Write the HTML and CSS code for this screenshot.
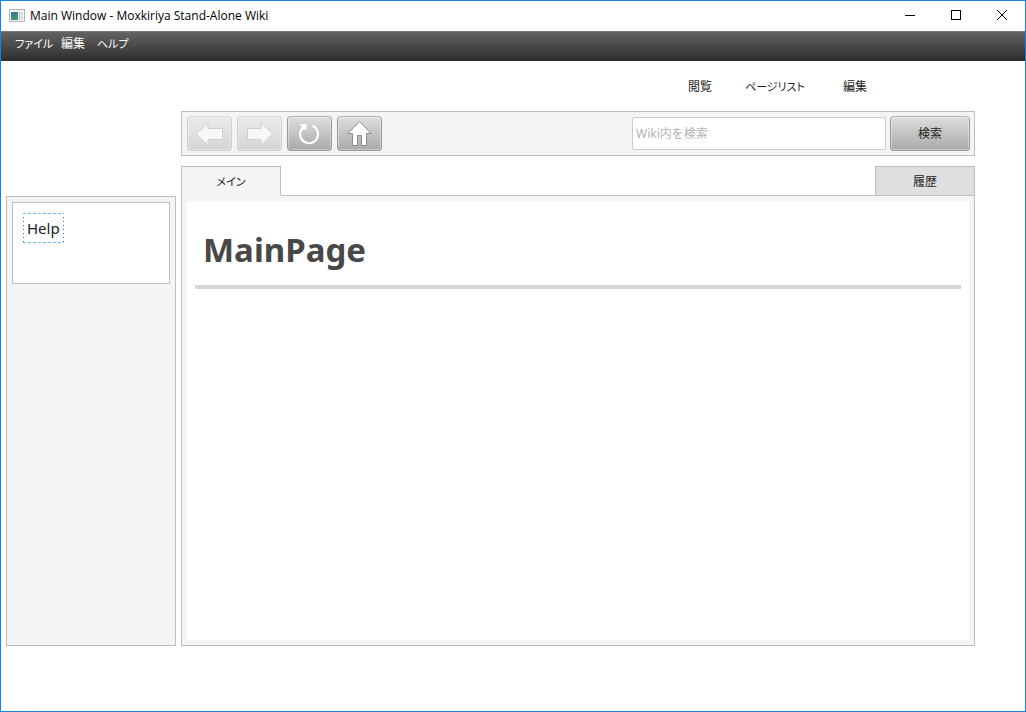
FILE: index.html
```html
<!DOCTYPE html>
<html lang="ja">
<head>
<meta charset="utf-8">
<title>Main Window - Moxkiriya Stand-Alone Wiki</title>
<link rel="stylesheet" href="styles.css">
</head>
<body>
<div class="window">
  <header class="titlebar">
    <svg class="app-icon" width="16" height="16" viewBox="0 0 16 16" aria-hidden="true">
      <defs><linearGradient id="app" x2="0.6" y2="1"><stop offset="0" stop-color="#3d6fa0"/><stop offset="1" stop-color="#3f9a68"/></linearGradient></defs>
      <rect x="0.5" y="1.500" width="15" height="12" fill="#f4f6f6" stroke="#b0b4b8"/>
      <rect x="2" y="4" width="7" height="8" fill="url(#app)"/>
      <rect x="10" y="4" width="1" height="8" fill="#a9c4cc"/>
      <rect x="12" y="4" width="2" height="8" fill="#d6dcde"/>
    </svg>
    <span class="title">Main Window - Moxkiriya Stand-Alone Wiki</span>
    <div class="controls">
      <button type="button" aria-label="最小化"><svg width="12" height="12" viewBox="0 0 12 12"><path d="M1 5.500h10" stroke="#000" fill="none"/></svg></button>
      <button type="button" aria-label="最大化"><svg width="12" height="12" viewBox="0 0 12 12"><rect x="1.500" y="0.500" width="9" height="9" stroke="#000" fill="none"/></svg></button>
      <button type="button" aria-label="閉じる"><svg width="12" height="12" viewBox="0 0 12 12"><path d="M1 0l10 10M11 0L1 10" stroke="#000" fill="none"/></svg></button>
    </div>
  </header>
  <nav class="menubar">
    <button type="button" class="kana">ファイル</button>
    <button type="button">編集</button>
    <button type="button" class="kana">ヘルプ</button>
  </nav>
  <div class="body">
    <aside class="sidebar">
      <div class="side-box"><a class="help" href="#help">Help</a></div>
    </aside>
    <main class="main">
      <nav class="modes">
        <button type="button" class="mode">閲覧</button>
        <button type="button" class="mode kana">ページリスト</button>
        <button type="button" class="mode">編集</button>
      </nav>
      <div class="toolbar">
        <button type="button" class="btn icon" aria-label="戻る" disabled>
          <svg width="27" height="26" viewBox="1 0 27 26"><path d="M1.500 13L13 1.500V7.500H27.500V18.500H13V24.500Z" fill="#fff" stroke="#999"/></svg>
        </button>
        <button type="button" class="btn icon" aria-label="進む" disabled>
          <svg width="27" height="26" viewBox="0 0 27 26"><path d="M26.500 13L15 1.500V7.500H1.500V18.500H15V24.500Z" fill="#fff" stroke="#999"/></svg>
        </button>
        <button type="button" class="btn icon" aria-label="更新">
          <svg width="27" height="26" viewBox="1 0 27 26"><path d="M17.500 4.800A9 9 0 1 1 8 6.500" fill="none" stroke="#fff" stroke-width="2"/><path d="M5 3H11.500V9.500L9.500 8L6.500 10.500L5 9L7 6Z" fill="#fff"/></svg>
        </button>
        <button type="button" class="btn icon" aria-label="ホーム">
          <svg width="27" height="26" viewBox="1 0 27 26"><path d="M14.500 0.500L26 12.500H21.500V24.500H16.500V14.500H12.500V24.500H7.500V12.500H3Z" fill="#fff" stroke="#8c8c8c"/></svg>
        </button>
        <form class="search">
          <input type="text" aria-label="検索" placeholder="Wiki内を検索">
          <button type="button" class="btn submit">検索</button>
        </form>
      </div>
      <div class="tabs" role="tablist">
        <button type="button" class="tab active kana" role="tab" aria-selected="true">メイン</button>
        <button type="button" class="tab" role="tab" aria-selected="false">履歴</button>
      </div>
      <section class="panel">
        <article class="page"><h1>MainPage</h1></article>
      </section>
    </main>
  </div>
</div>
</body>
</html>
```
FILE: styles.css
```css
* { box-sizing: border-box; }

body {
  margin: 0;
  font: 12px/18px "Noto Sans", "Noto Sans CJK JP", sans-serif;
  color: #222;
}

button {
  padding: 0;
  border: 0;
  background: none;
  color: inherit;
  font: inherit;
  font-feature-settings: "palt";
}

.kana { font-size: 11px; }

.window {
  display: flex;
  flex-direction: column;
  min-height: 100vh;
  border: 1px solid #1883d7;
  background: #fff;
}

.titlebar {
  display: flex;
  align-items: center;
  height: 30px;
  padding-left: 8px;
  color: #000;
}

.title {
  margin-left: 5px;
  font-family: "Open Sans", sans-serif;
}

.controls { display: flex; margin-left: auto; }

.controls button {
  display: grid;
  place-items: center;
  width: 46px;
  height: 30px;
}

.menubar {
  display: grid;
  grid-template-columns: 46px 36px auto;
  justify-content: start;
  align-items: start;
  height: 30px;
  padding: 3px 14px;
  border-top: 1px solid #777;
  background: linear-gradient(#636363, #2d2d2d);
  color: #fff;
}

.menubar button { text-align: left; white-space: nowrap; }

.body {
  flex: 1;
  display: grid;
  grid-template-columns: 170px 1fr;
  gap: 5px;
  padding: 0 50px 65px 5px;
}

.sidebar {
  margin-top: 135px;
  padding: 5px;
  border: 1px solid #bebebe;
  background: #f4f4f4;
}

.side-box {
  height: 82px;
  padding: 10px;
  border: 1px solid #bebebe;
  background: #fff;
}

.help {
  display: inline-block;
  padding: 4px;
  background:
    repeating-linear-gradient(90deg, #6fbcf6 0 3px, transparent 3px 5px) top / 100% 1px no-repeat,
    repeating-linear-gradient(90deg, #6fbcf6 0 3px, transparent 3px 5px) bottom / 100% 1px no-repeat,
    repeating-linear-gradient(#1883d7 0 1px, transparent 1px 4px) left / 1px 100% no-repeat,
    repeating-linear-gradient(#1883d7 0 1px, transparent 1px 4px) right / 1px 100% no-repeat;
  color: #222;
  font-size: 15px;
  line-height: 22px;
  text-decoration: none;
}

.main { display: flex; flex-direction: column; min-width: 0; }

.modes {
  display: flex;
  justify-content: flex-end;
  height: 50px;
  padding: 2px 80px 0 0;
}

.mode { width: 80px; }
.mode:first-child { width: 70px; }

.toolbar {
  display: flex;
  align-items: center;
  gap: 5px;
  height: 45px;
  padding: 0 4px 0 5px;
  border: 1px solid #bebebe;
  background: #f4f4f4;
}

.btn {
  height: 35px;
  border: 1px solid #999;
  border-top-color: #b4b4b4;
  border-radius: 4px;
  background: linear-gradient(#dedede, #a9a9a9);
  box-shadow: inset 0 0 0 1px rgba(255, 255, 255, 0.35);
}

.icon { display: grid; place-items: center; width: 45px; }
.icon:disabled { opacity: 0.4; }

.search { display: flex; align-items: center; gap: 4px; margin-left: auto; }

.search input {
  width: 254px;
  height: 33px;
  padding: 0 3px;
  border: 1px solid #ccc;
  border-radius: 2px;
  background: #fff;
  font: inherit;
}

.search input::placeholder { color: #b4b4b4; opacity: 1; }

.submit { width: 80px; }

.tabs {
  display: flex;
  justify-content: space-between;
  height: 30px;
  margin-top: 10px;
  position: relative;
}

.tab {
  width: 100px;
  padding-top: 2px;
  border: 1px solid #bebebe;
  background: #dfdfdf;
}

.tab.active {
  border-bottom-color: #f4f4f4;
  background: #f4f4f4;
}

.panel {
  flex: 1;
  display: flex;
  margin-top: -1px;
  padding: 5px;
  border: 1px solid #bebebe;
  background: #f4f4f4;
}

.page { flex: 1; padding: 24px 8px; background: #fff; }

h1 {
  margin: 0;
  padding: 0 8px 10px;
  border-bottom: 4px solid #d7d7d7;
  color: #484848;
  font-size: 33px;
  line-height: 50px;
}
```
